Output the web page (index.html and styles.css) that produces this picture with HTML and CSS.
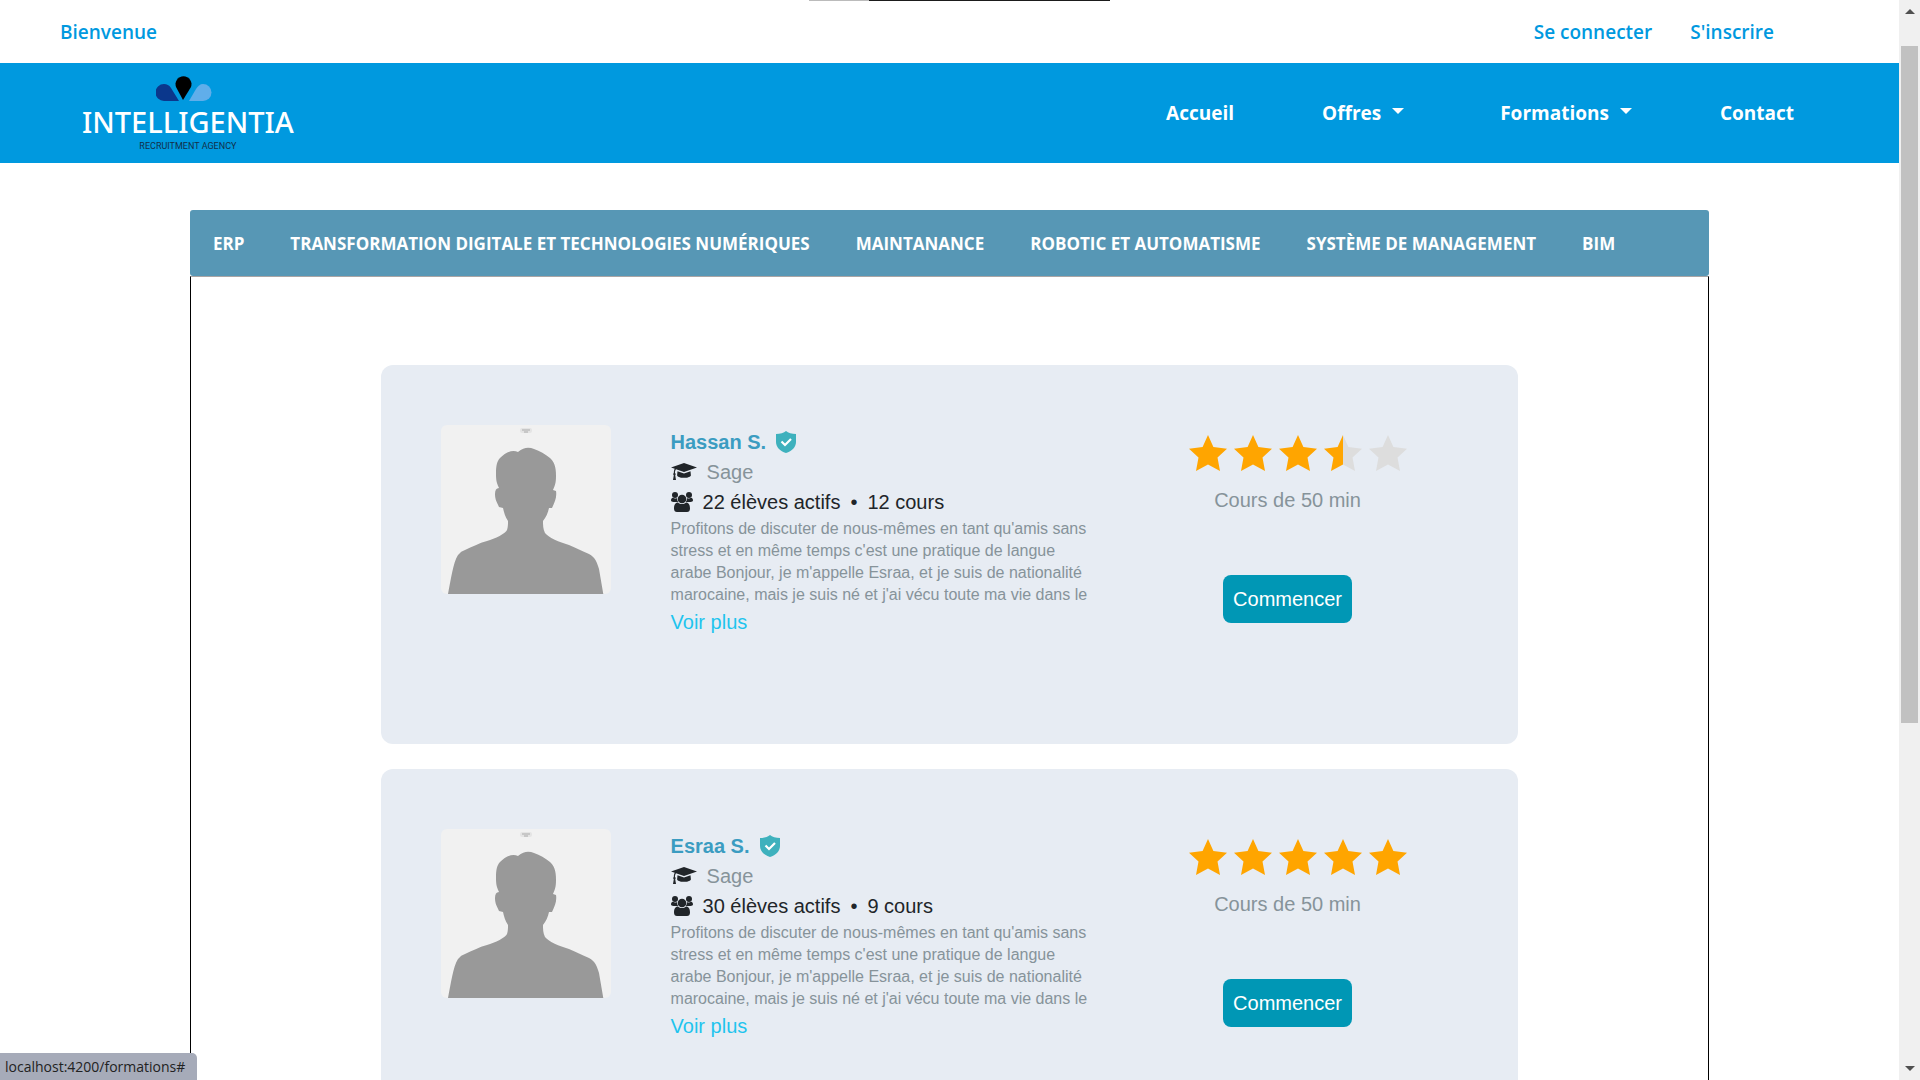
FILE: index.html
```html
<!DOCTYPE html>
<html lang="fr">
<head>
<meta charset="utf-8">
<title>Intelligentia - Formations</title>
<link rel="stylesheet" href="styles.css">
</head>
<body>
<svg class="sprite" aria-hidden="true">
  <symbol id="shield" viewBox="0 0 20 22"><path fill="#3eb1bd" d="M10 0C8 2 4 3 0 3v8c0 5 4 9 10 11 6-2 10-6 10-11V3C16 3 12 2 10 0z"/><path d="M5.500 10.500l3.500 3.500 6-6" fill="none" stroke="#fff" stroke-width="2.200"/></symbol>
  <symbol id="cap" viewBox="0 0 26 18"><path d="M13 0L26 4.500 13 9 5 6.300C4.200 7.200 4 8.500 4 10c.8.600.9 1.500.2 2.200L5 17H2l.8-4.800C2 11.500 2.100 10.600 2.800 10c0-1.800.3-3.200 1-4.200L0 4.500zM6.500 8.200L13 10.400l6.500-2.200.4 4c0 1.500-3 2.600-6.900 2.600s-6.900-1.100-6.900-2.600z"/></symbol>
  <symbol id="users" viewBox="0 0 22 20"><circle cx="4" cy="3" r="3"/><circle cx="18" cy="3" r="3"/><circle cx="11" cy="7" r="4.300"/><path d="M2 5.800c1.300 1 3 1 4 .2 0 1.800.4 2.900 1.400 4H2.500C1 10 0 9.500 0 8.300c0-1 .5-2.300 2-2.500zM20 5.800c-1.300 1-3 1-4 .2 0 1.800-.4 2.900-1.400 4h4.900c1.500 0 2.500-.5 2.500-1.700 0-1-.5-2.300-2-2.500zM7 10.500c2.300 2 5.700 2 8 0 2.700 0 4 2.500 4 6 0 2.500-1.200 3.500-3 3.500H6c-1.800 0-3-1-3-3.500 0-3.500 1.300-6 4-6z"/></symbol>
  <symbol id="star" viewBox="0 0 38 37"><path d="M19 0l5.400 12L38 13.700 28.500 22.500 31 36 19 29.500 7 36l2.500-13.500L0 13.700 13.600 12z"/></symbol>
  <symbol id="star-half" viewBox="0 0 38 37"><path fill="#ddd" d="M19 0l5.400 12L38 13.700 28.500 22.500 31 36 19 29.500z"/><path d="M19 0v29.500L7 36l2.500-13.500L0 13.700 13.600 12z"/></symbol>
  <symbol id="person" viewBox="0 0 170 169"><rect x="79" y="3" width="12" height="5" rx="2" fill="#e4e4e4"/><path d="M81 5h8M83 7h4" stroke="#aaa"/><path fill="#999" d="M7 169C10 154 12 138 17 130q3-4 7-5c7-3 14-7 22-9 8-2 19-8 20-11 1-3 1-6 1-9-3-4-4-9-5-13l-4-1c-2-5-4-7-4-13q0-6 4-6c-3-6-3-10-3-15 0-7 1-12 4-15 5-5 12-9 18-6 6-5 11-5 16-3 6 2 11 5 16 9 4 4 6 8 6 18 0 7-1 9-3 14l3 1c1 6-1 11-4 17h-3c-1 5-3 9-6 13 0 4 0 8 2 12 4 5 14 9 24 12 7 3 13 6 20 9 6 3 8 8 10 15l6 35z"/></symbol>
</svg>
<div class="page">
  <header>
    <div class="topbar">
      <a href="#">Bienvenue</a>
      <nav class="account" aria-label="Compte"><a href="#">Se connecter</a><a href="#">S'inscrire</a></nav>
    </div>
    <div class="navbar">
      <a class="logo" href="#">
        <svg class="logo-mark" viewBox="0 0 56 28" aria-hidden="true"><path fill="#0b378c" d="M23 27L15 14C13 11 11 10 8 10a8 8 0 0 0 0 17z"/><path fill="#000" d="M27 26L20 13a8 8 0 1 1 15 0z"/><path fill="#60aeea" d="M33 27l7-12c2-3 4-5 7-5a8 8 0 0 1 0 17z"/></svg>
        <span class="logo-name">INTELLIGENTIA</span>
        <span class="logo-sub">RECRUITMENT AGENCY</span>
      </a>
      <nav class="menu" aria-label="Menu principal">
        <a href="#">Accueil</a>
        <a class="drop" href="#">Offres</a>
        <a class="drop" href="#">Formations</a>
        <a href="#">Contact</a>
      </nav>
    </div>
  </header>
  <main>
    <nav class="categories" aria-label="Catégories">
      <a href="#">ERP</a>
      <a href="#">TRANSFORMATION DIGITALE ET TECHNOLOGIES NUMÉRIQUES</a>
      <a href="#">MAINTANANCE</a>
      <a href="#">ROBOTIC ET AUTOMATISME</a>
      <a href="#">SYSTÈME DE MANAGEMENT</a>
      <a href="#">BIM</a>
    </nav>
    <div class="list">
      <article class="card">
        <svg class="avatar"><use href="#person"/></svg>
        <div class="info">
          <h2>Hassan S. <svg class="shield"><use href="#shield"/></svg></h2>
          <div class="row muted"><svg class="cap"><use href="#cap"/></svg>Sage</div>
          <div class="row stats"><svg class="users"><use href="#users"/></svg>22 élèves actifs <span class="dot">•</span> 12 cours</div>
          <p>Profitons de discuter de nous-mêmes en tant qu'amis sans<br>stress et en même temps c'est une pratique de langue<br>arabe Bonjour, je m'appelle Esraa, et je suis de nationalité<br>marocaine, mais je suis né et j'ai vécu toute ma vie dans le</p>
          <a class="more" href="#">Voir plus</a>
        </div>
        <div class="side">
          <div class="stars" role="img" aria-label="3,5 sur 5">
            <svg><use href="#star"/></svg><svg><use href="#star"/></svg><svg><use href="#star"/></svg><svg><use href="#star-half"/></svg><svg class="off"><use href="#star"/></svg>
          </div>
          <div class="muted">Cours de 50 min</div>
          <button type="button">Commencer</button>
        </div>
      </article>
      <article class="card">
        <svg class="avatar"><use href="#person"/></svg>
        <div class="info">
          <h2>Esraa S. <svg class="shield"><use href="#shield"/></svg></h2>
          <div class="row muted"><svg class="cap"><use href="#cap"/></svg>Sage</div>
          <div class="row stats"><svg class="users"><use href="#users"/></svg>30 élèves actifs <span class="dot">•</span> 9 cours</div>
          <p>Profitons de discuter de nous-mêmes en tant qu'amis sans<br>stress et en même temps c'est une pratique de langue<br>arabe Bonjour, je m'appelle Esraa, et je suis de nationalité<br>marocaine, mais je suis né et j'ai vécu toute ma vie dans le</p>
          <a class="more" href="#">Voir plus</a>
        </div>
        <div class="side">
          <div class="stars" role="img" aria-label="5 sur 5">
            <svg><use href="#star"/></svg><svg><use href="#star"/></svg><svg><use href="#star"/></svg><svg><use href="#star"/></svg><svg><use href="#star"/></svg>
          </div>
          <div class="muted">Cours de 50 min</div>
          <button type="button">Commencer</button>
        </div>
      </article>
    </div>
  </main>
</div>
<div class="scrollbar" aria-hidden="true"><i class="up"></i><div class="thumb"></div><i class="down"></i></div>
<div class="top-edge" aria-hidden="true"></div>
<div class="status">localhost:4200/formations#</div>
</body>
</html>
```
FILE: styles.css
```css
* { box-sizing: border-box; }
body {
  margin: 0;
  height: 100vh;
  overflow: hidden;
  display: flex;
  background: #fff;
  color: #212529;
  font: 20px/30px "Liberation Sans", Arial, sans-serif;
}
a { text-decoration: none; color: inherit; }
.sprite { position: absolute; width: 0; height: 0; }
.page { flex: 1; min-width: 0; }

.topbar {
  display: flex;
  justify-content: space-between;
  align-items: center;
  height: 63px;
  padding: 0 125px 0 60px;
  color: #0099df;
  font: 600 19px/30px "Open Sans", sans-serif;
}
.account { display: flex; gap: 38px; }

.navbar {
  display: flex;
  justify-content: space-between;
  align-items: center;
  height: 100px;
  padding: 0 105px 0 82px;
  background: #0099df;
  color: #fff;
}
.logo { display: flex; flex-direction: column; align-items: center; padding-bottom: 2px; }
.logo-mark { width: 56px; height: 28px; margin-right: 8px; }
.logo-name { font: 500 29px/40px "Noto Sans", sans-serif; }
.logo-sub { font: 9px/8px Roboto, sans-serif; color: #12304a; }
.menu { display: flex; gap: 88px; font: 700 19px/30px "Open Sans", sans-serif; }
.drop { display: flex; align-items: center; gap: 11px; }
.drop + .drop { margin-left: 8px; }
.drop::after {
  content: "";
  margin-bottom: 4px;
  border: solid transparent;
  border-width: 6px 6px 0;
  border-top-color: #fff;
}

main { width: 80%; margin: 47px auto 0; }
.categories {
  display: flex;
  align-items: center;
  gap: 46px;
  height: 66px;
  padding: 2px 23px 0;
  border-radius: 3px;
  background: #5797b5;
  color: #fff;
  font: 700 17px/30px "Open Sans", sans-serif;
  white-space: nowrap;
}
.list {
  display: flex;
  flex-direction: column;
  gap: 25px;
  padding: 88px 0;
  border: solid #000;
  border-width: 1px 1px 0;
  border-top-color: #a9a5a5;
}
.card {
  display: flex;
  width: 75%;
  min-height: 379px;
  margin: 0 auto;
  padding: 60px;
  border-radius: 12px;
  background: #e7ecf3;
}
.avatar { flex: none; width: 170px; height: 169px; border-radius: 6px; background: #f1f1f1; }
.info { flex: none; width: 457px; margin-left: 60px; padding-top: 2px; }
h2 {
  display: flex;
  align-items: center;
  gap: 10px;
  margin: 0;
  font: 700 20px/30px "Liberation Sans", Arial, sans-serif;
  color: #3b9cc1;
}
.row { display: flex; align-items: center; gap: 10px; }
.muted { color: #86939a; }
.shield { width: 20px; height: 22px; }
.cap { width: 26px; height: 18px; fill: #212529; }
.users { width: 22px; height: 20px; fill: #212529; }
.info p {
  margin: 0;
  padding: 1px 0;
  font-size: 16px;
  line-height: 22px;
  color: #86939a;
}
.more { color: #1fc4ee; }
.side { display: flex; flex-direction: column; align-items: center; width: 200px; margin-left: 60px; padding-top: 10px; }
.stars { display: flex; gap: 7px; margin-bottom: 13px; padding-left: 20px; fill: #ffa500; }
.stars svg { flex: none; width: 38px; height: 37px; }
button {
  margin-top: 60px;
  padding: 9px 10px;
  border: 0;
  border-radius: 8px;
  background: #0097b5;
  color: #fff;
  font: inherit;
}
.stars .off { fill: #ddd; }

.scrollbar {
  flex: none;
  display: flex;
  flex-direction: column;
  align-items: center;
  width: 21px;
  padding: 9px 0;
  background: #f0f0f0;
}
.up, .down { border: 5px solid transparent; }
.up { border-top: 0; border-bottom-color: #505050; }
.down { margin-top: auto; border-bottom: 0; border-top-color: #505050; }
.thumb { width: 17px; height: 677px; margin-top: 32px; background: #c1c1c1; }
.top-edge {
  position: fixed;
  top: 0;
  left: 809px;
  width: 301px;
  height: 1px;
  background: linear-gradient(90deg, #bbb 60px, #1b1b1b 60px);
}
.status {
  position: fixed;
  left: 0;
  bottom: 0;
  padding: 3px 12px 3px 5px;
  border-top-right-radius: 5px;
  background: #a6abb9;
  color: #222;
  font: 14px/21px "Open Sans", sans-serif;
}
```
